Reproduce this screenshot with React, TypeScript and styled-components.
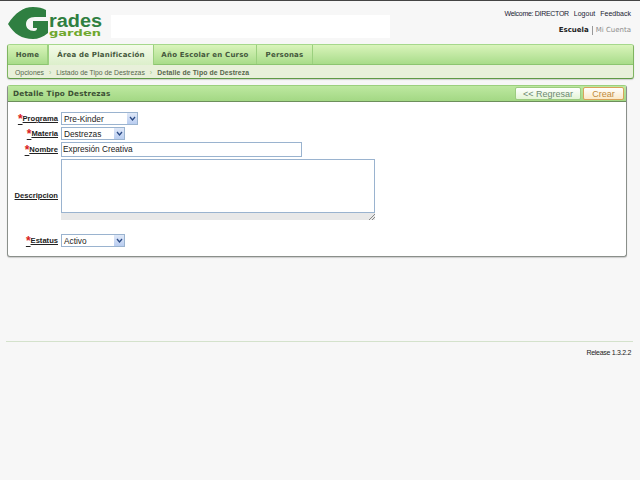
import React from 'react';
import styled, { createGlobalStyle } from 'styled-components';

const GlobalStyle = createGlobalStyle`
  html, body {
    margin: 0;
    padding: 0;
    background: #f7f7f7;
    font-family: "Liberation Sans", Arial, sans-serif;
    font-size: 8px;
    color: #222;
    overflow: hidden;
  }
`;

const Page = styled.div`
  width: 640px;
  height: 480px;
  box-sizing: border-box;
  border-top: 1px solid #444;
  display: flex;
  flex-direction: column;
`;

const Header = styled.header`
  height: 43px;
  display: flex;
  padding: 6px 9px 0 8px;
  box-sizing: border-box;
`;

const LogoBox = styled.div`
  width: 94px;
  height: 32px;
  flex: none;
`;

const Banner = styled.div`
  width: 279px;
  height: 23px;
  margin: 8px 0 0 9px;
  background: #fff;
  flex: none;
`;

const HeaderRight = styled.div`
  margin-left: auto;
  display: flex;
  flex-direction: column;
  align-items: flex-end;
`;

const TopLinks = styled.div`
  display: flex;
  gap: 5px;
  margin-top: 2px;
  font-size: 7px;
  line-height: 9px;
  color: #223;
`;

const Welcome = styled.span`
  letter-spacing: -0.3px;
`;

const AccountLinks = styled.div`
  display: flex;
  align-items: center;
  margin-top: 8px;
  font-family: "DejaVu Sans", sans-serif;
  font-size: 7px;
  line-height: 9px;
`;

const AccountLink = styled.span<{ $active?: boolean }>`
  color: ${p => (p.$active ? '#222' : '#8c8c8c')};
  font-weight: ${p => (p.$active ? 700 : 400)};
  & + & {
    border-left: 1px solid #999;
    margin-left: 3px;
    padding-left: 3px;
  }
`;

const Nav = styled.nav`
  margin: 0 6px 0 7px;
  height: 35px;
  box-sizing: border-box;
  border: 1px solid #7fb561;
  border-top-color: #a6d88c;
  border-radius: 3px;
  border-bottom-color: #5f9a46;
  box-shadow: 0 1px 1px #ccc;
  background: #e8f0da;
  overflow: hidden;
`;

const TabBar = styled.div`
  height: 19px;
  display: flex;
  background: linear-gradient(#d9f4bb, #a9dc8a);
  border-bottom: 1px solid #8cc570;
`;

const Tab = styled.div<{ $active?: boolean; $w: number }>`
  width: ${p => p.$w}px;
  height: ${p => (p.$active ? 20 : 19)}px;
  box-sizing: border-box;
  display: flex;
  align-items: center;
  justify-content: center;
  font-family: "DejaVu Sans", sans-serif;
  font-size: 7px;
  font-weight: 700;
  letter-spacing: 0.2px;
  color: #44583c;
  border-right: 1px solid #9bd07e;
  background: ${p => (p.$active ? 'linear-gradient(#f4fbe9, #dcefcb)' : 'none')};
  ${p => (p.$active ? 'border-left: 1px solid #9bd07e;' : '')}
`;

const Crumbs = styled.div`
  height: 14px;
  display: flex;
  align-items: center;
  padding-left: 7px;
  font-size: 6.85px;
  color: #56664c;
`;

const CrumbSep = styled.span`
  color: #9ac284;
  margin: 0 5px;
`;

const CrumbCurrent = styled.span`
  font-weight: 700;
  letter-spacing: 0.12px;
`;

const Panel = styled.section`
  margin: 6px 0 0 7px;
  width: 620px;
  height: 172px;
  box-sizing: border-box;
  background: #fff;
  border: 1px solid #8a8f8a;
  border-top-color: #9bd07e;
  border-radius: 3px;
  box-shadow: 0 1px 1px #ccc;
  flex: none;
`;

const PanelHead = styled.div`
  height: 15px;
  display: flex;
  align-items: center;
  justify-content: space-between;
  padding: 0 2px 0 5px;
  background: linear-gradient(#bde8a0, #a3d884);
  border-bottom: 1px solid #6d8f5c;
`;

const PanelTitle = styled.h2`
  margin: 0;
  font-family: "DejaVu Sans", sans-serif;
  font-size: 7.3px;
  font-weight: 700;
  letter-spacing: 0.2px;
  color: #3c5034;
`;

const Buttons = styled.div`
  display: flex;
  gap: 2px;
`;

const Button = styled.button<{ $primary?: boolean; $w: number }>`
  width: ${p => p.$w}px;
  height: 13px;
  padding: 0;
  border-radius: 2px;
  font-family: "Liberation Sans", Arial, sans-serif;
  font-size: 9px;
  line-height: 10px;
  border: 1px solid ${p => (p.$primary ? '#d9a35a' : '#9ccb80')};
  background: ${p => (p.$primary ? 'linear-gradient(#fff, #fbe9c8)' : 'linear-gradient(#fff, #e3f4d5)')};
  color: ${p => (p.$primary ? '#c08a3a' : '#6d8a70')};
`;

const FormGrid = styled.div`
  display: grid;
  grid-template-columns: 50px auto;
  column-gap: 3px;
  row-gap: 2px;
  justify-content: start;
  align-items: center;
  padding-top: 10px;
`;

const Label = styled.label`
  justify-self: end;
  display: flex;
  align-items: center;
  font-size: 7.6px;
  font-weight: 700;
  color: #222;
  text-decoration: underline;
  white-space: nowrap;
`;

const Required = styled.span`
  color: #d92020;
  font-size: 12px;
  font-weight: 700;
  line-height: 8px;
  height: 8px;
  display: inline-block;
`;

const SelectBox = styled.div<{ $w: number }>`
  width: ${p => p.$w}px;
  height: 13px;
  box-sizing: border-box;
  border: 1px solid #9ab3cf;
  background: #fff;
  display: flex;
  align-items: center;
  justify-content: space-between;
  padding-left: 2px;
  font-size: 8.3px;
  color: #222;
`;

const SelectArrow = styled.span`
  width: 10px;
  height: 11px;
  background: linear-gradient(#dfe8f8, #b9cdf0);
  display: flex;
  align-items: center;
  justify-content: center;
`;

const TextInput = styled.div`
  width: 241px;
  height: 15px;
  box-sizing: border-box;
  border: 1px solid #9ab3cf;
  background: #fff;
  display: flex;
  align-items: center;
  padding-left: 1px;
  font-size: 8.25px;
  color: #222;
`;

const AreaWrap = styled.div`
  width: 314px;
  margin-bottom: 12px;
`;

const Area = styled.div`
  height: 54px;
  box-sizing: border-box;
  border: 1px solid #9ab3cf;
  background: #fff;
`;

const AreaGrip = styled.div`
  height: 7px;
  background: #e8e8e8;
  display: flex;
  justify-content: flex-end;
  align-items: flex-end;
`;

const Spacer = styled.div`
  flex: none;
  height: 84px;
`;

const FootRule = styled.div`
  margin: 0 7px 0 6px;
  border-top: 1px solid #d4e2cc;
`;

const Release = styled.div`
  margin: 7px 9px 0 0;
  text-align: right;
  font-size: 7px;
  letter-spacing: -0.3px;
  color: #222;
`;

const Logo = () => (
  <svg width="94" height="32" viewBox="0 0 94 32">
    <path d="M0 17 C7 6 15 0 25 0 C30 0 35 1 38 3 V10 H27 C21 10 18 13 18 17 C18 21 21 24 26 24 C28 24 29 23 29 21 H25 V14 H40 V26 C35 30 30 32 25 32 C14 32 6 27 0 17 Z" fill="#2f7f41" />
    <text x="41" y="20" fontFamily="Liberation Sans, sans-serif" fontSize="18" fontWeight="700" fill="#2f7f41" textLength="53" lengthAdjust="spacingAndGlyphs">rades</text>
    <text x="41" y="29" fontFamily="DejaVu Sans, sans-serif" fontSize="8" fontWeight="700" fill="#6fa82e" textLength="52" lengthAdjust="spacingAndGlyphs">garden</text>
  </svg>
);

const Chevron = () => (
  <svg width="7" height="5" viewBox="0 0 7 5">
    <path d="M1 1 L3.5 4 L6 1" fill="none" stroke="#2b4a85" strokeWidth="1.3" />
  </svg>
);

const Grip = () => (
  <svg width="6" height="6" viewBox="0 0 6 6">
    <path d="M0 6 L6 0 M3 6 L6 3" stroke="#888" strokeWidth="1" />
  </svg>
);

const Select = ({ value, w }: { value: string; w: number }) => (
  <SelectBox $w={w}>
    {value}
    <SelectArrow><Chevron /></SelectArrow>
  </SelectBox>
);

const App = () => (
  <Page>
    <GlobalStyle />
    <Header>
      <LogoBox><Logo /></LogoBox>
      <Banner />
      <HeaderRight>
        <TopLinks>
          <Welcome>Welcome: DIRECTOR</Welcome>
          <span>Logout</span>
          <span>Feedback</span>
        </TopLinks>
        <AccountLinks>
          <AccountLink $active>Escuela</AccountLink>
          <AccountLink>Mi Cuenta</AccountLink>
        </AccountLinks>
      </HeaderRight>
    </Header>

    <Nav>
      <TabBar>
        <Tab $w={40}>Home</Tab>
        <Tab $active $w={106}>Área de Planificación</Tab>
        <Tab $w={103}>Año Escolar en Curso</Tab>
        <Tab $w={56}>Personas</Tab>
      </TabBar>
      <Crumbs>
        <span>Opciones</span>
        <CrumbSep>›</CrumbSep>
        <span>Listado de Tipo de Destrezas</span>
        <CrumbSep>›</CrumbSep>
        <CrumbCurrent>Detalle de Tipo de Destreza</CrumbCurrent>
      </Crumbs>
    </Nav>

    <Panel>
      <PanelHead>
        <PanelTitle>Detalle Tipo Destrezas</PanelTitle>
        <Buttons>
          <Button $w={66}>&lt;&lt; Regresar</Button>
          <Button $primary $w={41}>Crear</Button>
        </Buttons>
      </PanelHead>
      <FormGrid>
        <Label><Required>*</Required>Programa</Label>
        <Select value="Pre-Kinder" w={77} />
        <Label><Required>*</Required>Materia</Label>
        <Select value="Destrezas" w={64} />
        <Label><Required>*</Required>Nombre</Label>
        <TextInput>Expresión Creativa</TextInput>
        <Label>Descripcion</Label>
        <AreaWrap>
          <Area />
          <AreaGrip><Grip /></AreaGrip>
        </AreaWrap>
        <Label><Required>*</Required>Estatus</Label>
        <Select value="Activo" w={64} />
      </FormGrid>
    </Panel>

    <Spacer />
    <FootRule />
    <Release>Release 1.3.2.2</Release>
  </Page>
);

export default App;
